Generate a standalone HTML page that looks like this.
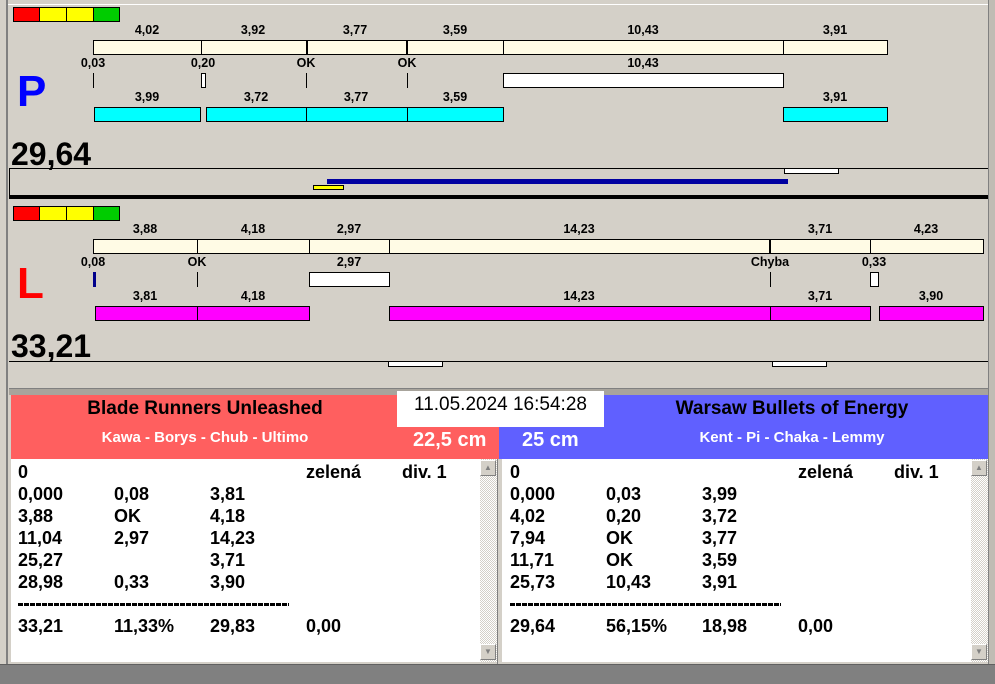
<!DOCTYPE html>
<html><head><meta charset="utf-8"><style>
*{margin:0;padding:0;box-sizing:border-box}
body{width:995px;height:684px;background:#d4d0c8;position:relative;overflow:hidden;font-family:"Liberation Sans",Arial,sans-serif;font-weight:bold}
div{position:absolute}
.t{font-size:12.5px;color:#000;transform:translateX(-50%);white-space:nowrap;line-height:14px}
.cr{background:#fffbe5;border:1px solid #000;height:15px}
.cy{background:#00ffff;border:1px solid #000;height:15px}
.mg{background:#ff00ff;border:1px solid #000;height:15px}
.wb{background:#fff;border:1px solid #000;height:15px}
.v{width:1px;background:#000}
.r{font-size:18px;line-height:22px;color:#000;white-space:nowrap}
.sb{background:repeating-conic-gradient(#d4d0c8 0 25%,#fff 0 50%) 0 0/2px 2px}
.btn{width:16px;height:16px;background:#d4d0c8;border:1px solid;border-color:#fff #808080 #808080 #fff;font-size:8px;color:#808080;text-align:center;line-height:14px}
.d{font-size:13px;line-height:14px;letter-spacing:-0.6px;white-space:nowrap}
</style></head><body>
<div style="left:0;top:0;width:8px;height:664px;background:#d4d0c8;border-right:2px solid #808080"></div>
<div style="left:988px;top:0;width:7px;height:664px;background:#c0bcb4;border-left:1px solid #808080"></div>
<div style="left:8px;top:0;width:980px;height:5px;border-bottom:1px solid #fff"></div>

<!-- P section -->
<div style="left:13px;top:7px;width:27px;height:15px;background:#f00;border:1px solid #000"></div>
<div style="left:39px;top:7px;width:28px;height:15px;background:#ff0;border:1px solid #000"></div>
<div style="left:66px;top:7px;width:28px;height:15px;background:#ff0;border:1px solid #000"></div>
<div style="left:93px;top:7px;width:27px;height:15px;background:#0c0;border:1px solid #000"></div>

<div class="t" style="left:147px;top:23px">4,02</div>
<div class="t" style="left:253px;top:23px">3,92</div>
<div class="t" style="left:355px;top:23px">3,77</div>
<div class="t" style="left:455px;top:23px">3,59</div>
<div class="t" style="left:643px;top:23px">10,43</div>
<div class="t" style="left:835px;top:23px">3,91</div>
<div class="cr" style="left:93px;top:40px;width:795px"></div>
<div class="v" style="left:201px;top:40px;height:15px"></div>
<div class="v" style="left:306px;top:40px;height:15px;width:2px"></div>
<div class="v" style="left:406px;top:40px;height:15px;width:2px"></div>
<div class="v" style="left:503px;top:40px;height:15px"></div>
<div class="v" style="left:783px;top:40px;height:15px"></div>

<div class="t" style="left:93px;top:56px">0,03</div>
<div class="t" style="left:203px;top:56px">0,20</div>
<div class="t" style="left:306px;top:56px">OK</div>
<div class="t" style="left:407px;top:56px">OK</div>
<div class="t" style="left:643px;top:56px">10,43</div>
<div class="v" style="left:93px;top:73px;height:15px"></div>
<div class="wb" style="left:201px;top:73px;width:5px"></div>
<div class="v" style="left:306px;top:73px;height:15px"></div>
<div class="v" style="left:407px;top:73px;height:15px"></div>
<div class="wb" style="left:503px;top:73px;width:281px"></div>

<div style="left:17px;top:68px;font-size:44px;color:#0000ff;line-height:48px">P</div>

<div class="t" style="left:147px;top:90px">3,99</div>
<div class="t" style="left:256px;top:90px">3,72</div>
<div class="t" style="left:356px;top:90px">3,77</div>
<div class="t" style="left:455px;top:90px">3,59</div>
<div class="t" style="left:835px;top:90px">3,91</div>
<div class="cy" style="left:94px;top:107px;width:107px"></div>
<div class="cy" style="left:206px;top:107px;width:101px"></div>
<div class="cy" style="left:306px;top:107px;width:102px"></div>
<div class="cy" style="left:407px;top:107px;width:97px"></div>
<div class="cy" style="left:783px;top:107px;width:105px"></div>

<div style="left:11px;top:136px;font-size:32px;line-height:36px">29,64</div>
<div style="left:9px;top:168px;width:979px;height:1px;background:#000"></div>
<div style="left:9px;top:168px;width:1px;height:27px;background:#000"></div>
<div style="left:784px;top:168px;width:55px;height:6px;background:#fff;border:1px solid #000"></div>
<div style="left:327px;top:179px;width:461px;height:5px;background:#0000a0"></div>
<div style="left:313px;top:185px;width:31px;height:5px;background:#ff0;border:1px solid #000"></div>
<div style="left:9px;top:195px;width:979px;height:4px;background:#000"></div>

<!-- L section -->
<div style="left:13px;top:206px;width:27px;height:15px;background:#f00;border:1px solid #000"></div>
<div style="left:39px;top:206px;width:28px;height:15px;background:#ff0;border:1px solid #000"></div>
<div style="left:66px;top:206px;width:28px;height:15px;background:#ff0;border:1px solid #000"></div>
<div style="left:93px;top:206px;width:27px;height:15px;background:#0c0;border:1px solid #000"></div>

<div class="t" style="left:145px;top:222px">3,88</div>
<div class="t" style="left:253px;top:222px">4,18</div>
<div class="t" style="left:349px;top:222px">2,97</div>
<div class="t" style="left:579px;top:222px">14,23</div>
<div class="t" style="left:820px;top:222px">3,71</div>
<div class="t" style="left:926px;top:222px">4,23</div>
<div class="cr" style="left:93px;top:239px;width:891px"></div>
<div class="v" style="left:197px;top:239px;height:15px"></div>
<div class="v" style="left:309px;top:239px;height:15px"></div>
<div class="v" style="left:389px;top:239px;height:15px"></div>
<div class="v" style="left:769px;top:239px;height:15px;width:2px"></div>
<div class="v" style="left:870px;top:239px;height:15px"></div>

<div class="t" style="left:93px;top:255px">0,08</div>
<div class="t" style="left:197px;top:255px">OK</div>
<div class="t" style="left:349px;top:255px">2,97</div>
<div class="t" style="left:770px;top:255px">Chyba</div>
<div class="t" style="left:874px;top:255px">0,33</div>
<div style="left:93px;top:272px;width:3px;height:15px;background:#00008b"></div>
<div class="v" style="left:197px;top:272px;height:15px"></div>
<div class="wb" style="left:309px;top:272px;width:81px"></div>
<div class="v" style="left:770px;top:272px;height:15px"></div>
<div class="wb" style="left:870px;top:272px;width:9px"></div>

<div style="left:17px;top:260px;font-size:44px;color:#f00;line-height:48px">L</div>

<div class="t" style="left:145px;top:289px">3,81</div>
<div class="t" style="left:253px;top:289px">4,18</div>
<div class="t" style="left:579px;top:289px">14,23</div>
<div class="t" style="left:820px;top:289px">3,71</div>
<div class="t" style="left:931px;top:289px">3,90</div>
<div class="mg" style="left:95px;top:306px;width:103px"></div>
<div class="mg" style="left:197px;top:306px;width:113px"></div>
<div class="mg" style="left:389px;top:306px;width:382px"></div>
<div class="mg" style="left:770px;top:306px;width:101px"></div>
<div class="mg" style="left:879px;top:306px;width:105px"></div>

<div style="left:11px;top:328px;font-size:32px;line-height:36px">33,21</div>
<div style="left:9px;top:361px;width:979px;height:1px;background:#000"></div>
<div style="left:388px;top:361px;width:55px;height:6px;background:#fff;border:1px solid #000"></div>
<div style="left:772px;top:361px;width:55px;height:6px;background:#fff;border:1px solid #000"></div>
<div style="left:9px;top:388px;width:979px;height:7px;background:#a8a49c;border-top:1px solid #808080"></div>

<!-- headers -->
<div style="left:11px;top:395px;width:488px;height:64px;background:#ff5f5f"></div>
<div style="left:499px;top:395px;width:489px;height:64px;background:#6060ff"></div>
<div style="left:11px;top:397px;width:388px;text-align:center;font-size:19px;line-height:24px">Blade Runners Unleashed</div>
<div style="left:11px;top:429px;width:388px;text-align:center;font-size:15px;color:#fff;line-height:18px">Kawa - Borys - Chub - Ultimo</div>
<div style="left:397px;top:391px;width:207px;height:36px;background:#fff;font-weight:normal;font-size:19px;text-align:center;line-height:28px">11.05.2024 16:54:28</div>
<div style="left:413px;top:428px;font-size:20px;color:#fff;line-height:24px">22,5 cm</div>
<div style="left:522px;top:428px;font-size:20px;color:#fff;line-height:24px">25 cm</div>
<div style="left:604px;top:397px;width:376px;text-align:center;font-size:19px;line-height:24px">Warsaw Bullets of Energy</div>
<div style="left:604px;top:429px;width:376px;text-align:center;font-size:15px;color:#fff;line-height:18px">Kent - Pi - Chaka - Lemmy</div>

<!-- text areas -->
<div style="left:11px;top:459px;width:486px;height:203px;background:#fff"></div>
<div class="sb" style="left:480px;top:459px;width:17px;height:203px"></div>
<div class="btn" style="left:480px;top:460px">▲</div>
<div class="btn" style="left:480px;top:644px">▼</div>
<div style="left:497px;top:459px;width:5px;height:205px;background:#d4d0c8;border-left:1px solid #808080"></div>
<div style="left:502px;top:459px;width:486px;height:203px;background:#fff"></div>
<div class="sb" style="left:971px;top:459px;width:17px;height:203px"></div>
<div class="btn" style="left:971px;top:460px">▲</div>
<div class="btn" style="left:971px;top:644px">▼</div>

<div class="r" style="left:18px;top:461px">0</div><div class="r" style="left:306px;top:461px">zelená</div><div class="r" style="left:402px;top:461px">div. 1</div>
<div class="r" style="left:18px;top:483px">0,000</div><div class="r" style="left:114px;top:483px">0,08</div><div class="r" style="left:210px;top:483px">3,81</div>
<div class="r" style="left:18px;top:505px">3,88</div><div class="r" style="left:114px;top:505px">OK</div><div class="r" style="left:210px;top:505px">4,18</div>
<div class="r" style="left:18px;top:527px">11,04</div><div class="r" style="left:114px;top:527px">2,97</div><div class="r" style="left:210px;top:527px">14,23</div>
<div class="r" style="left:18px;top:549px">25,27</div><div class="r" style="left:210px;top:549px">3,71</div>
<div class="r" style="left:18px;top:571px">28,98</div><div class="r" style="left:114px;top:571px">0,33</div><div class="r" style="left:210px;top:571px">3,90</div>
<div style="left:18px;top:603px;width:271px;height:3px;background:repeating-linear-gradient(90deg,#000 0 5px,transparent 5px 6px)"></div>
<div class="r" style="left:18px;top:615px">33,21</div><div class="r" style="left:114px;top:615px">11,33%</div><div class="r" style="left:210px;top:615px">29,83</div><div class="r" style="left:306px;top:615px">0,00</div>

<div class="r" style="left:510px;top:461px">0</div><div class="r" style="left:798px;top:461px">zelená</div><div class="r" style="left:894px;top:461px">div. 1</div>
<div class="r" style="left:510px;top:483px">0,000</div><div class="r" style="left:606px;top:483px">0,03</div><div class="r" style="left:702px;top:483px">3,99</div>
<div class="r" style="left:510px;top:505px">4,02</div><div class="r" style="left:606px;top:505px">0,20</div><div class="r" style="left:702px;top:505px">3,72</div>
<div class="r" style="left:510px;top:527px">7,94</div><div class="r" style="left:606px;top:527px">OK</div><div class="r" style="left:702px;top:527px">3,77</div>
<div class="r" style="left:510px;top:549px">11,71</div><div class="r" style="left:606px;top:549px">OK</div><div class="r" style="left:702px;top:549px">3,59</div>
<div class="r" style="left:510px;top:571px">25,73</div><div class="r" style="left:606px;top:571px">10,43</div><div class="r" style="left:702px;top:571px">3,91</div>
<div style="left:510px;top:603px;width:271px;height:3px;background:repeating-linear-gradient(90deg,#000 0 5px,transparent 5px 6px)"></div>
<div class="r" style="left:510px;top:615px">29,64</div><div class="r" style="left:606px;top:615px">56,15%</div><div class="r" style="left:702px;top:615px">18,98</div><div class="r" style="left:798px;top:615px">0,00</div>

<div style="left:0;top:664px;width:995px;height:20px;background:#808080;border-top:1px solid #606060"></div>
</body></html>
